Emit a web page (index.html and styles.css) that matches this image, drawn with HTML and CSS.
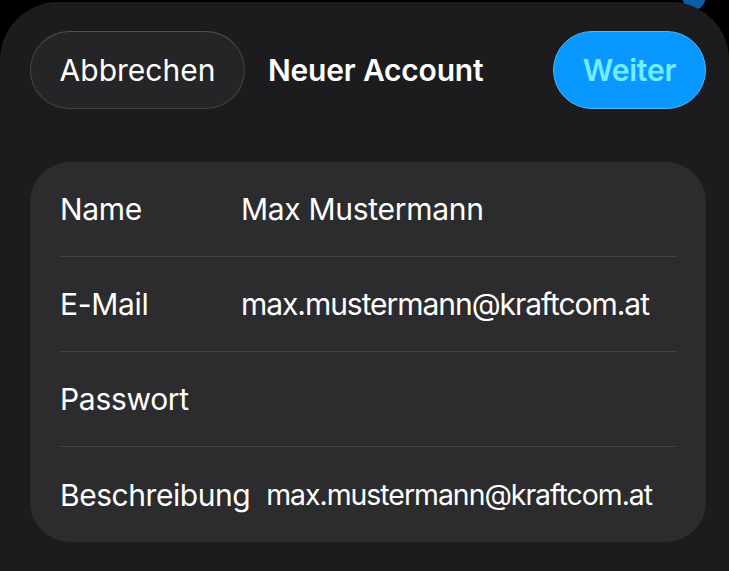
FILE: index.html
```html
<!DOCTYPE html>
<html lang="de">
<head>
<meta charset="utf-8">
<link rel="stylesheet" href="styles.css">
</head>
<body>
<div class="peek"></div>
<div class="sheet">
  <header class="bar">
    <button class="btn cancel">Abbrechen</button>
    <h1 class="title">Neuer Account</h1>
    <button class="btn next">Weiter</button>
  </header>
  <section class="card">
    <div class="row">
      <span class="label">Name</span>
      <span class="value">Max Mustermann</span>
    </div>
    <div class="row">
      <span class="label">E-Mail</span>
      <span class="value mail">max.mustermann@kraftcom.at</span>
    </div>
    <div class="row">
      <span class="label">Passwort</span>
      <span class="value"></span>
    </div>
    <div class="row tight">
      <span class="label">Beschreibung</span>
      <span class="value mail small">max.mustermann@kraftcom.at</span>
    </div>
  </section>
</div>
</body>
</html>
```

FILE: styles.css
```css
html, body {
  margin: 0;
  padding: 0;
  background: #000;
  width: 729px;
  height: 571px;
  overflow: hidden;
  font-family: Inter, "Liberation Sans", sans-serif;
  color: #fff;
}
body { position: relative; }

.peek {
  position: absolute;
  top: -20px;
  left: 682px;
  width: 24px;
  height: 30px;
  border-radius: 50%;
  background: #0b5fa6;
}

.sheet {
  position: relative;
  margin-top: 2px;
  height: 569px;
  background: #1c1c1e;
  border-radius: 58px 58px 0 0;
  box-sizing: border-box;
  padding: 29px 23px 0 30px;
}

.bar {
  display: flex;
  align-items: center;
  gap: 23px;
  height: 78px;
}

.btn {
  height: 78px;
  border-radius: 39px;
  font-family: inherit;
  font-size: 30px;
  padding: 0;
  box-sizing: border-box;
}
.cancel {
  width: 215px;
  background: #252527;
  border: 1.5px solid #444446;
  border-top-color: #505052;
  color: #fff;
  font-weight: 400;
  letter-spacing: 0;
}
.next {
  width: 153px;
  background: #0898ff;
  border: 1.5px solid #4db8ff;
  color: #72ecff;
  font-weight: 600;
  letter-spacing: -0.2px;
}
.title {
  flex: 1;
  margin: 0;
  font-size: 30px;
  font-weight: 600;
  letter-spacing: -0.2px;
}

.card {
  margin-top: 53px;
  background: #2c2c2e;
  border-radius: 40px;
  padding: 0 29px 0 30px;
}
.row {
  display: flex;
  align-items: center;
  height: 94px;
  border-bottom: 1px solid #434346;
  font-size: 30px;
  letter-spacing: -0.3px;
}
.row:last-child { border-bottom: none; height: 95px; }
.label { width: 181px; flex: none; }
.tight .label { width: auto; margin-right: 16px; letter-spacing: -0.45px; }
.value.mail { letter-spacing: -1.05px; }
.value.small { font-size: 28.4px; letter-spacing: -1px; }
```
